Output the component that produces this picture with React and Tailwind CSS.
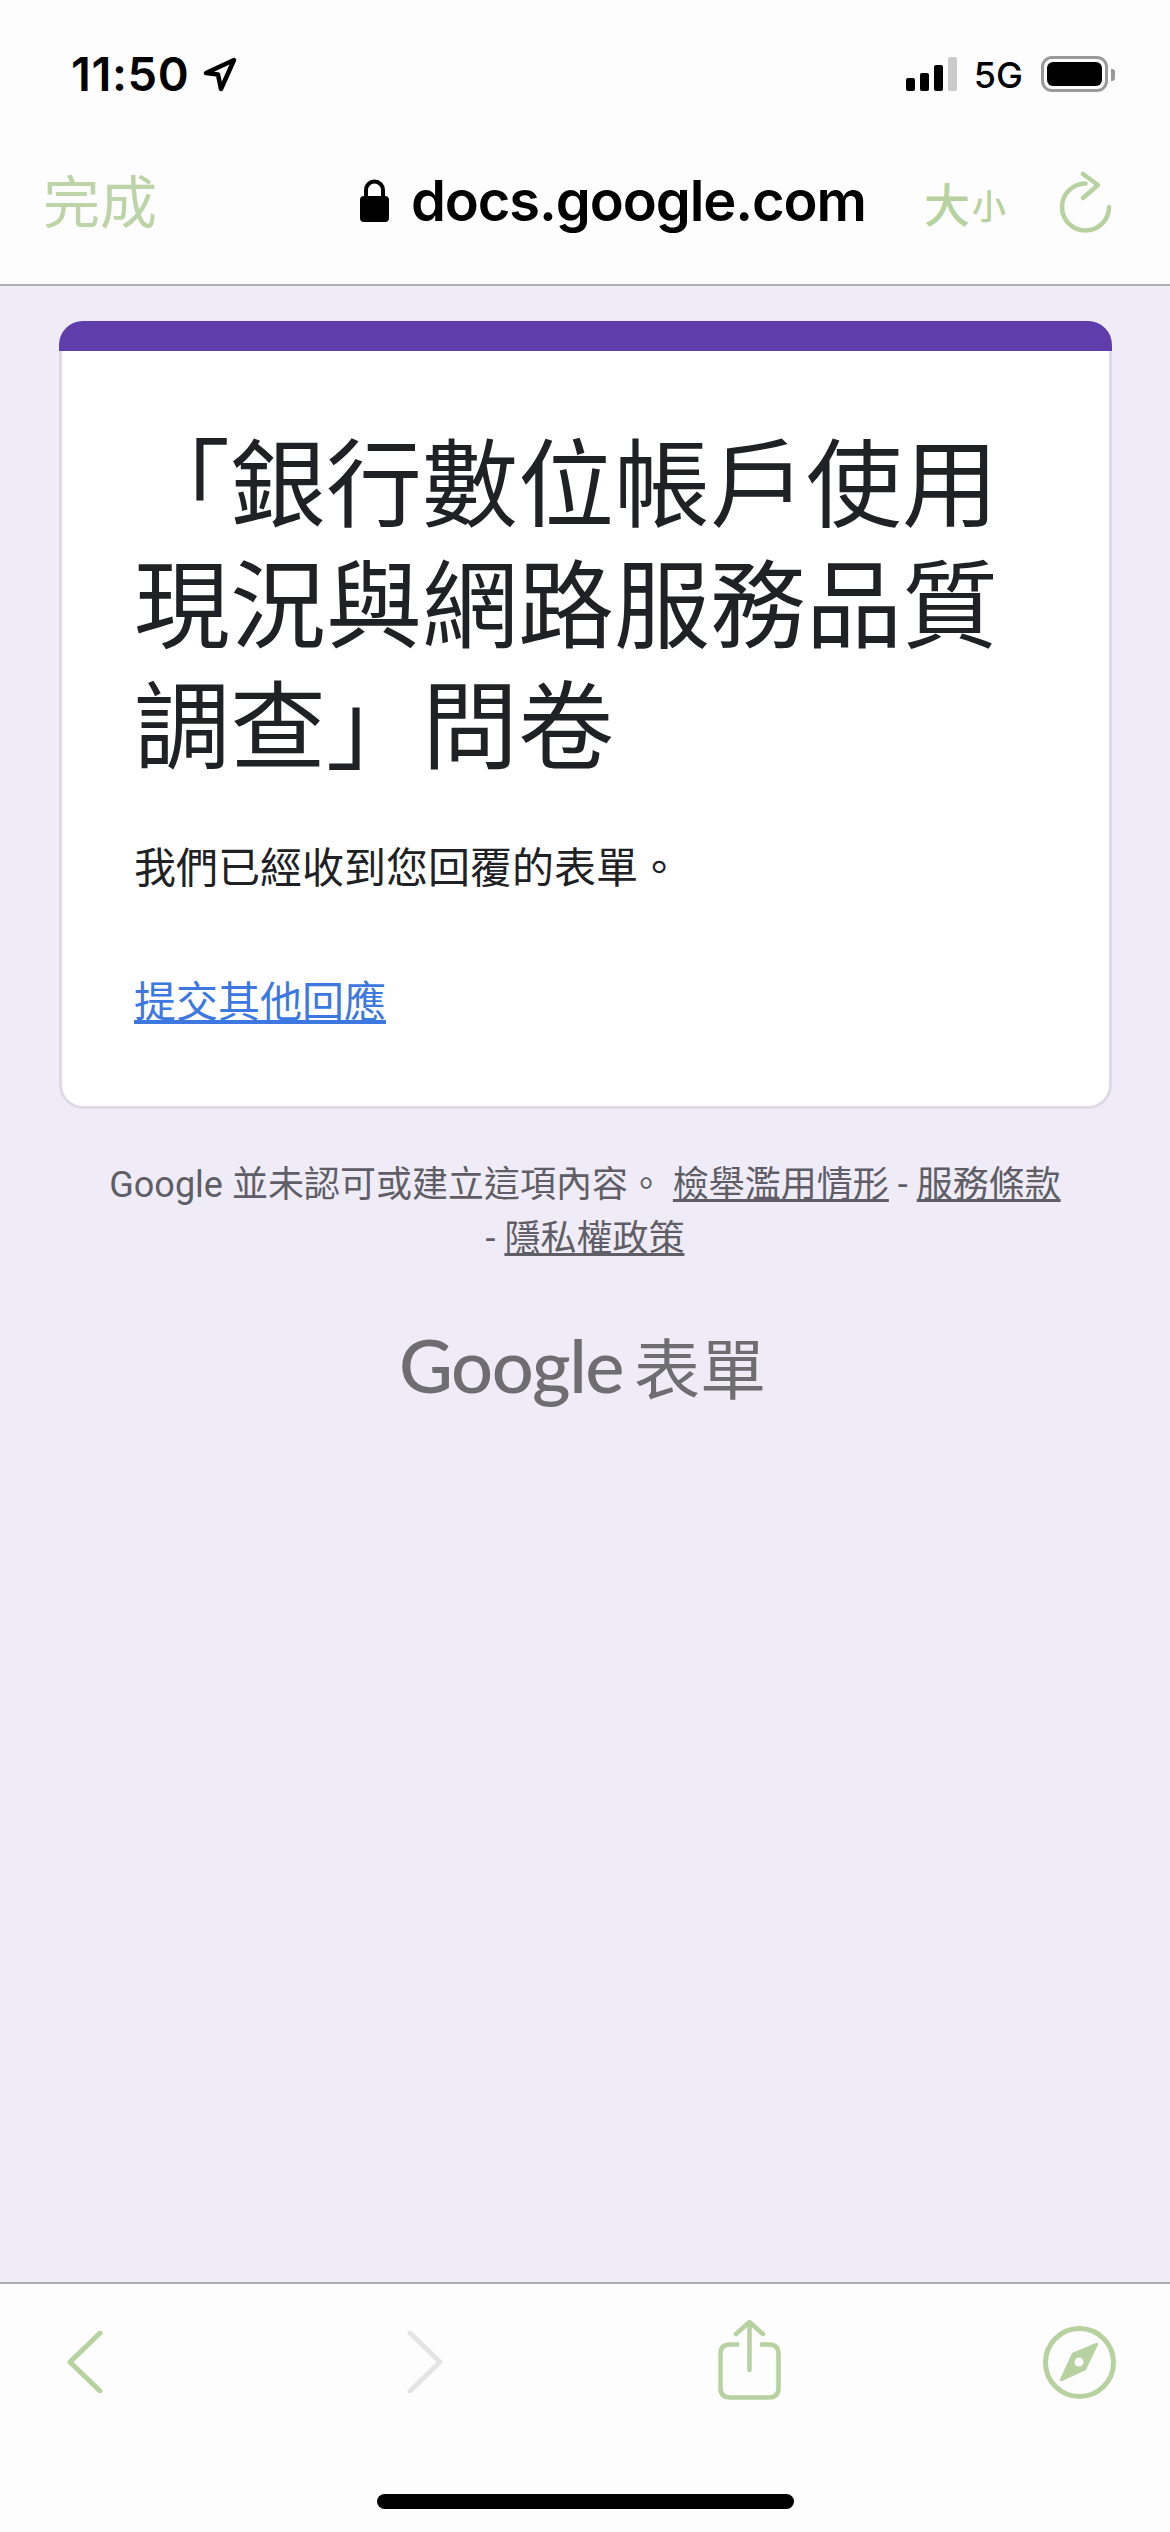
import React from 'react';

const cjk = { fontFamily: '"Noto Sans CJK TC", "Noto Sans CJK JP", sans-serif' };
const mixed = { fontFamily: 'Roboto, "Noto Sans CJK TC", sans-serif' };

function StatusBar() {
  return (
    <div className="flex h-[92px] items-end justify-between pl-[71px] pr-[55px] text-black" style={{ fontFamily: 'Inter, sans-serif' }}>
      <div className="flex items-center gap-[12px] h-[36px]">
        <span className="text-[47px] leading-[36px] font-semibold tracking-[0.6px]">11:50</span>
        <svg width="37" height="36" viewBox="0 0 37 36" fill="none">
          <path d="M33 4 L5 17 L17 18.5 L20 33 Z" stroke="#000" strokeWidth="4.5" strokeLinejoin="round" />
        </svg>
      </div>
      <div className="flex items-end h-[36px]">
        <div className="flex items-end gap-[5px] h-[34px] mb-px">
          <div className="w-[9px] h-[13px] rounded-[2px] bg-black" />
          <div className="w-[9px] h-[18px] rounded-[2px] bg-black" />
          <div className="w-[9px] h-[26px] rounded-[2px] bg-black" />
          <div className="w-[9px] h-[34px] rounded-[2px] bg-[#cbcbcb]" />
        </div>
        <span className="ml-[17px] text-[36px] leading-[34px] font-medium">5G</span>
        <div className="ml-[18px] w-[67px] h-[36px] rounded-[11px] border-[3px] border-[#999] p-[3px]">
          <div className="w-full h-full rounded-[6px] bg-black" />
        </div>
        <div className="ml-[3px] mb-[11px] w-[4px] h-[12px] rounded-r-[3px] bg-[#999]" />
      </div>
    </div>
  );
}

function NavBar() {
  return (
    <div className="relative flex h-[194px] items-start pl-[43px] pr-[56px]">
      <span className="mt-[73px] text-[57px] leading-[66px] text-[#bcd4a8]" style={cjk}>完成</span>
      <div className="ml-[203px] mt-[79px] flex items-center">
        <svg width="29" height="44" viewBox="0 0 29 44">
          <path d="M6 18 V11 a8.5 8.5 0 0 1 17 0 V18" fill="none" stroke="#000" strokeWidth="4" />
          <rect x="0" y="17" width="29" height="26" rx="4" fill="#000" />
        </svg>
        <span className="ml-[22px] text-[56px] leading-[60px] font-semibold tracking-[-1.1px] text-black" style={{ fontFamily: 'Inter, sans-serif' }}>docs.google.com</span>
      </div>
      <div className="ml-auto mt-[78px] flex items-center">
        <span className="flex items-end text-[#b7d1a0] font-medium" style={cjk}>
          <span className="text-[46px] leading-[56px]">大</span>
          <span className="ml-[2px] text-[34px] leading-[50px]">小</span>
        </span>
        <svg className="ml-[54px]" width="54" height="64" viewBox="0 0 54 64" fill="none" stroke="#b7d1a0" strokeWidth="4.5" strokeLinecap="round" strokeLinejoin="round">
          <path d="M49 37 A23.5 23.5 0 1 1 25.5 13.5" />
          <path d="M23 4 L38 15 L23 28" />
        </svg>
      </div>
    </div>
  );
}

function FormCard() {
  return (
    <div className="ml-[59px] mr-[58px] mt-[35px] h-[788px] flex flex-col rounded-[24px] overflow-hidden">
      <div className="h-[30px] bg-[#5f3dab]" />
      <div className="flex-1 bg-white border-x-[3px] border-b-[3px] border-[#dcdae4] rounded-b-[24px] pl-[72px] pr-[39px] pt-[66px]" style={cjk}>
        <h1 className="text-[96px] leading-[121px] text-[#202124] font-normal">「銀行數位帳戶使用現況與網路服務品質調查」問卷</h1>
        <p className="mt-[55px] text-[42px] leading-[60px] text-[#202124]">我們已經收到您回覆的表單。</p>
        <a className="mt-[74px] block w-fit text-[42px] leading-[60px] text-[#3c78e0] underline" href="#">提交其他回應</a>
      </div>
    </div>
  );
}

function Footer() {
  return (
    <div className="px-[100px] text-center">
      <p className="mt-[49px] text-[36px] leading-[54px] text-[#5f5e66]" style={mixed}>
        Google 並未認可或建立這項內容。 <a className="underline" href="#">檢舉濫用情形</a> - <a className="underline" href="#">服務條款</a> - <a className="underline" href="#">隱私權政策</a>
      </p>
      <div className="mt-[54px] pr-[5px] flex items-center justify-center text-[#6e6d72]">
        <span className="text-[74px] leading-[90px] font-medium tracking-[-1.5px]" style={{ fontFamily: 'Lato, sans-serif' }}>Google</span>
        <span className="ml-[11px] text-[66px] leading-[90px]" style={cjk}>表單</span>
      </div>
    </div>
  );
}

function Toolbar() {
  return (
    <div className="h-[250px] border-t-[2px] border-[#aeadb3] bg-[#fdfdfd] flex flex-col items-center">
      <div className="w-full flex justify-between pl-[67px] pr-[54px] pt-[36px] h-[210px]">
        <svg className="mt-[11px]" width="36" height="62" viewBox="0 0 36 62" fill="none" stroke="#b7d1a0" strokeWidth="5" strokeLinecap="round" strokeLinejoin="round">
          <path d="M33 2 L3 31 L33 60" />
        </svg>
        <svg className="mt-[11px] ml-[304px]" width="36" height="62" viewBox="0 0 36 62" fill="none" stroke="#e4e4e4" strokeWidth="5" strokeLinecap="round" strokeLinejoin="round">
          <path d="M3 2 L33 31 L3 60" />
        </svg>
        <svg className="ml-[275px]" width="64" height="80" viewBox="0 0 64 80" fill="none" stroke="#b7d1a0" strokeWidth="4.5" strokeLinejoin="round">
          <path d="M21 24.5 H12 Q2.5 24.5 2.5 34 V68 Q2.5 77.5 12 77.5 H51 Q60.5 77.5 60.5 68 V34 Q60.5 24.5 51 24.5 H42" />
          <path d="M31.5 50 V3 M18 14 L31.5 2 L45 14" strokeLinecap="round" />
        </svg>
        <svg className="ml-auto mt-[6px]" width="73" height="73" viewBox="0 0 73 73" fill="none">
          <circle cx="36.5" cy="36.5" r="34" stroke="#b7d1a0" strokeWidth="5" />
          <path fill="#b7d1a0" stroke="#b7d1a0" strokeWidth="2.5" strokeLinejoin="round" d="M54 18 L42 43 L18 54 L30 28 Z" />
          <circle cx="36" cy="36" r="4.5" fill="#fdfdfd" />
        </svg>
      </div>
      <div className="w-[417px] h-[15px] rounded-full bg-black" />
    </div>
  );
}

export default function App() {
  return (
    <div className="w-[1170px] h-[2532px] flex flex-col overflow-hidden bg-[#efecf7]">
      <div className="bg-[#fdfdfd] border-b-[2px] border-[#b0afb6] h-[286px]">
        <StatusBar />
        <NavBar />
      </div>
      <div className="flex-1">
        <FormCard />
        <Footer />
      </div>
      <Toolbar />
    </div>
  );
}
